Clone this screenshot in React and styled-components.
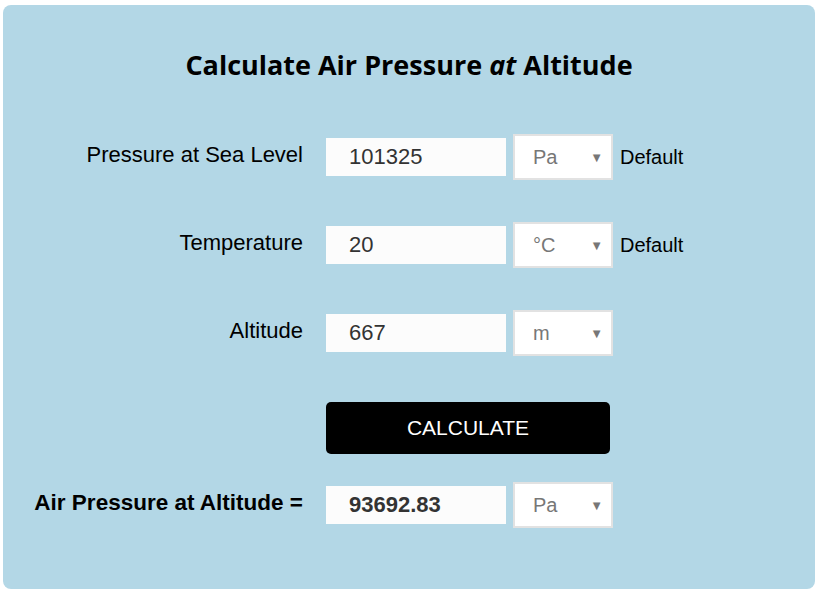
import { createGlobalStyle, styled } from "styled-components";

const GlobalStyle = createGlobalStyle`
  body {
    margin: 0;
    background: #fff;
    font-family: "Liberation Sans", Arial, sans-serif;
  }
`;

function UnitSelect({ unit }) {
  return (
    <Select>
      <SelectValue>{unit}</SelectValue>
      <Caret>▼</Caret>
    </Select>
  );
}

function Row({ label, value, unit, note, bold }) {
  return (
    <FormRow>
      <Label $bold={bold}>{label}</Label>
      <Input $bold={bold} defaultValue={value} readOnly />
      <UnitSelect unit={unit} />
      {note && <Note>{note}</Note>}
    </FormRow>
  );
}

export default function App() {
  return (
    <>
      <GlobalStyle />
      <Panel>
        <Title>
          Calculate Air Pressure <em>at</em> Altitude
        </Title>
        <Form>
          <Row label="Pressure at Sea Level" value="101325" unit="Pa" note="Default" />
          <Row label="Temperature" value="20" unit="°C" note="Default" />
          <Row label="Altitude" value="667" unit="m" />
          <ButtonRow>
            <CalcButton>CALCULATE</CalcButton>
          </ButtonRow>
          <Row label="Air Pressure at Altitude =" value="93692.83" unit="Pa" bold />
        </Form>
      </Panel>
    </>
  );
}

const Panel = styled.div`
  margin: 5px 4px 4px 3px;
  height: 584px;
  box-sizing: border-box;
  background: #b3d7e6;
  border-radius: 8px;
  padding-top: 40px;
`;

const Title = styled.h1`
  margin: 0;
  font-family: "Open Sans", sans-serif;
  font-size: 27px;
  font-weight: 700;
  line-height: 40px;
  text-align: center;
  color: #000;

  em {
    font-style: italic;
  }
`;

const Form = styled.div`
  margin-top: 49px;
  display: flex;
  flex-direction: column;
`;

const FormRow = styled.div`
  display: flex;
  align-items: center;
  height: 46px;
  margin-bottom: 42px;

  &:last-child {
    margin-bottom: 0;
  }
`;

const Label = styled.div`
  width: 300px;
  margin-right: 23px;
  text-align: right;
  font-size: ${(p) => (p.$bold ? "22.5px" : "22px")};
  font-weight: ${(p) => (p.$bold ? 700 : 400)};
  color: #000;
  margin-top: -4px;
`;

const Input = styled.input`
  width: 180px;
  height: 38px;
  box-sizing: border-box;
  border: none;
  outline: none;
  background: #fcfcfc;
  padding: 0 0 0 23px;
  font-family: "Liberation Sans", Arial, sans-serif;
  font-size: 22px;
  font-weight: ${(p) => (p.$bold ? 700 : 400)};
  color: #333;
`;

const Select = styled.div`
  width: 100px;
  height: 46px;
  box-sizing: border-box;
  margin-left: 7px;
  border: 2px solid #e2e2e2;
  background: #fff;
  display: flex;
  align-items: center;
  justify-content: space-between;
  padding: 0 8px 0 18px;
`;

const SelectValue = styled.span`
  font-size: 20px;
  color: #777;
`;

const Caret = styled.span`
  font-size: 13px;
  color: #777;
`;

const Note = styled.span`
  margin-left: 7px;
  font-size: 20px;
  color: #000;
`;

const ButtonRow = styled.div`
  display: flex;
  padding-left: 323px;
  margin-top: 4px;
  margin-bottom: 28px;
`;

const CalcButton = styled.button`
  width: 284px;
  height: 52px;
  border: none;
  border-radius: 5px;
  background: #000;
  color: #fff;
  font-family: "Liberation Sans", Arial, sans-serif;
  font-size: 21px;
  padding: 0;
`;
